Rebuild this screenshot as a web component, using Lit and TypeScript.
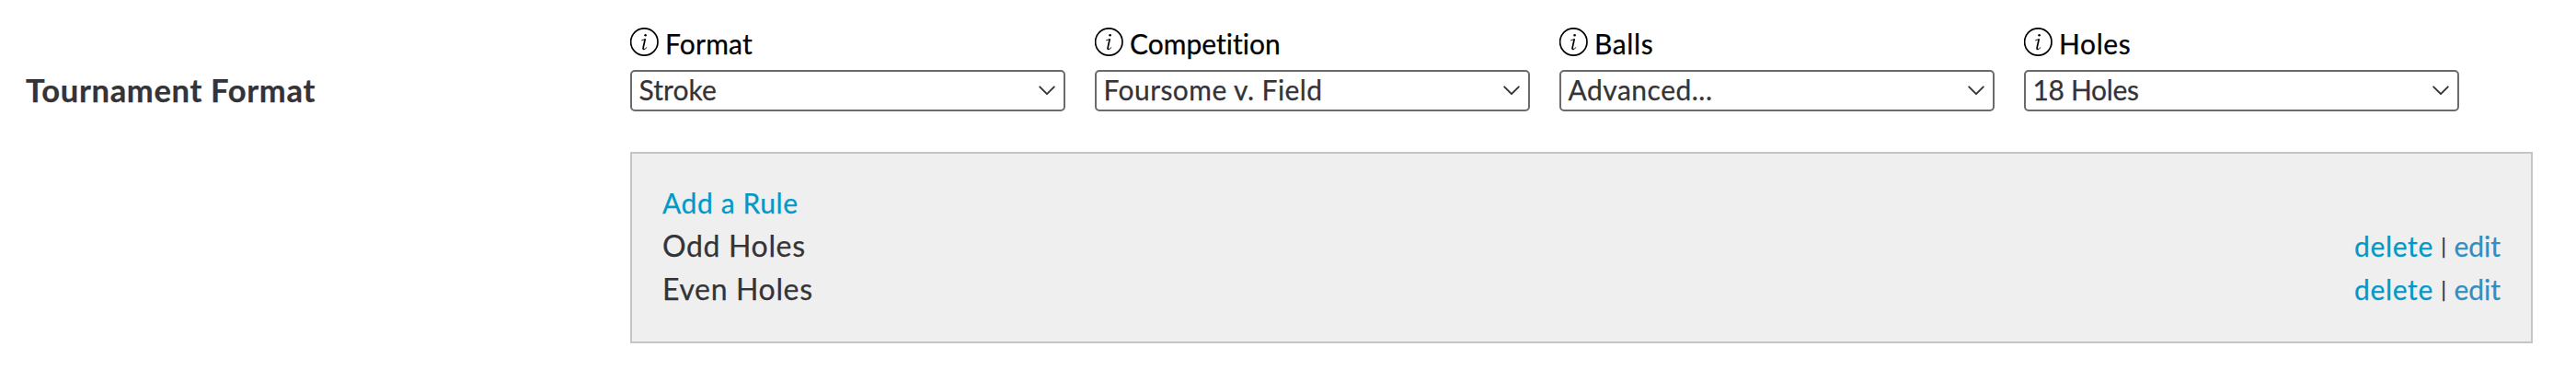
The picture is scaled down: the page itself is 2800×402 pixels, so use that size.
import { css, html, LitElement } from 'lit';
import { customElement, property } from 'lit/decorators.js';

@customElement('info-icon')
export class InfoIcon extends LitElement {
  static override styles = css`
    :host {
      display: block;
      width: 32px;
      height: 32px;
    }
    svg {
      display: block;
      fill: none;
      stroke: #000;
    }
    .stem {
      stroke-width: 1.7;
      stroke-linecap: round;
      stroke-linejoin: round;
    }
    .serif {
      stroke-width: 0.9;
      stroke-linecap: round;
    }
    .dot {
      fill: #000;
      stroke: none;
    }
  `;

  override render() {
    return html`
      <svg width="32" height="32" viewBox="0 0 32 32">
        <circle cx="15.3" cy="15.5" r="14.7" stroke-width="1.7" />
        <circle class="dot" cx="16.6" cy="8.2" r="1.3" />
        <path class="serif" d="M12.6 13.8 16.2 12.6" />
        <path class="stem" d="M16.1 13 14.2 21.6Q13.8 23.6 14.8 23.5" />
        <path class="serif" d="M14.6 23.6Q16.2 23.6 17.9 21.8" />
      </svg>
    `;
  }
}

@customElement('format-field')
export class FormatField extends LitElement {
  static override styles = css`
    :host {
      display: block;
      width: 473px;
      font-size: 30px;
    }
    .label {
      display: flex;
      align-items: flex-start;
      gap: 6.5px;
      height: 49px;
      margin-left: -0.5px;
      line-height: 40px;
      color: #000;
    }
    info-icon {
      margin-top: 3px;
    }
    .select {
      display: flex;
      justify-content: space-between;
      box-sizing: border-box;
      height: 45px;
      padding: 0 8px 0 7.5px;
      border: 2px solid #6b6b6d;
      border-radius: 5px;
      background: #fff;
      color: #333338;
      line-height: 38px;
    }
    .chevron {
      margin-top: 14px;
      fill: none;
      stroke: #333338;
      stroke-width: 1.9;
      stroke-linecap: round;
      stroke-linejoin: round;
    }
    /* tracking differs a little from word to word */
    .label.format {
      letter-spacing: 0.2px;
    }
    .label.balls,
    .label.holes {
      letter-spacing: 0.6px;
    }
    .select.format {
      letter-spacing: 0.1px;
    }
    .select.competition {
      letter-spacing: 0.43px;
    }
    .select.balls {
      letter-spacing: 0.5px;
    }
    .select.holes {
      letter-spacing: -0.35px;
    }
  `;

  @property({ type: String }) name = '';
  @property({ type: String }) label = '';
  @property({ type: String }) value = '';

  override render() {
    return html`
      <div class="label ${this.name}">
        <info-icon></info-icon>
        <span>${this.label}</span>
      </div>
      <div class="select ${this.name}">
        <span>${this.value}</span>
        <svg class="chevron" width="20" height="14" viewBox="0 0 20 14">
          <path d="M2.2 2.3 10 10.1 17.8 2.3" />
        </svg>
      </div>
    `;
  }
}

@customElement('rule-list')
export class RuleList extends LitElement {
  static override styles = css`
    :host {
      display: block;
      box-sizing: border-box;
      height: 208px;
      padding: 29px 33px 0 33px;
      border: 2px solid #c4c5c5;
      background: #efefef;
      color: #333338;
      font-size: 30px;
      line-height: 47px;
    }
    .row {
      display: flex;
      align-items: baseline;
      justify-content: space-between;
      height: 47px;
    }
    .row:first-child {
      line-height: 49px;
    }
    a {
      color: #0099c8;
      text-decoration: none;
    }
    .add {
      letter-spacing: 0.6px;
    }
    .name {
      font-size: 32px;
      letter-spacing: 0.65px;
    }
    .actions {
      display: flex;
      align-items: baseline;
    }
    .delete {
      letter-spacing: 0.65px;
    }
    .edit {
      color: #2f8fc3;
    }
    .bar {
      position: relative;
      top: -3px;
      width: 22.5px;
      font-size: 23px;
      line-height: 1;
      text-align: center;
    }
  `;

  @property({ type: Array }) rules: string[] = [];

  override render() {
    return html`
      <div class="row"><a class="add">Add a Rule</a></div>
      ${this.rules.map(
        (rule) => html`
          <div class="row">
            <span class="name">${rule}</span>
            <span class="actions">
              <a class="delete">delete</a>
              <span class="bar">|</span>
              <a class="edit">edit</a>
            </span>
          </div>
        `,
      )}
    `;
  }
}

const FIELDS = [
  { name: 'format', label: 'Format', value: 'Stroke' },
  { name: 'competition', label: 'Competition', value: 'Foursome v. Field' },
  { name: 'balls', label: 'Balls', value: 'Advanced...' },
  { name: 'holes', label: 'Holes', value: '18 Holes' },
];

@customElement('app-root')
export class AppRoot extends LitElement {
  static override styles = css`
    :host {
      display: grid;
      grid-template-columns: 657px 1fr;
      box-sizing: border-box;
      height: 402px;
      padding: 27px 47px 0 28px;
      background: #fff;
      font-family: Lato, 'Open Sans', sans-serif;
      font-variant-ligatures: none;
      -webkit-text-stroke: 0.25px currentColor;
    }
    h2 {
      margin: 50px 0 0;
      color: #333338;
      font-size: 34.5px;
      font-weight: 700;
      line-height: 41px;
      letter-spacing: 0.7px;
    }
    .fields {
      display: flex;
      gap: 32px;
      margin-bottom: 44px;
    }
  `;

  override render() {
    return html`
      <h2>Tournament Format</h2>
      <div>
        <div class="fields">
          ${FIELDS.map(
            (f) => html`<format-field .name=${f.name} .label=${f.label} .value=${f.value}></format-field>`,
          )}
        </div>
        <rule-list .rules=${['Odd Holes', 'Even Holes']}></rule-list>
      </div>
    `;
  }
}
